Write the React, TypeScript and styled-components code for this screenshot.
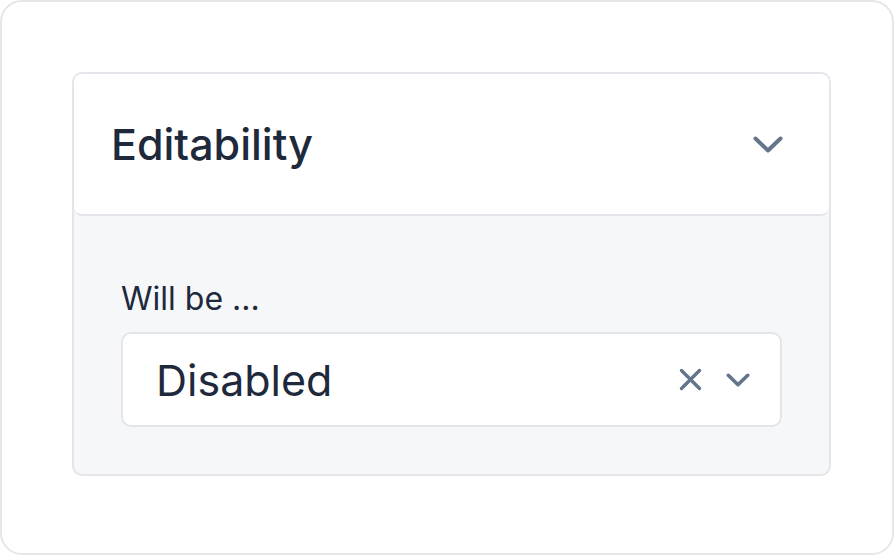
import React from "react";
import styled, { createGlobalStyle } from "styled-components";

const GlobalStyle = createGlobalStyle`
  html, body {
    margin: 0;
    padding: 0;
    background: #ffffff;
  }
  body {
    font-family: Inter, "Noto Sans", "Liberation Sans", sans-serif;
    color: #1e293b;
  }
`;

const Frame = styled.div`
  box-sizing: border-box;
  width: 894px;
  height: 555px;
  padding: 70px;
  border: 2px solid #e4e6ea;
  border-radius: 22px;
  background: #ffffff;
`;

const Card = styled.div`
  box-sizing: border-box;
  width: 759px;
  border: 2px solid #e3e5ea;
  border-radius: 10px;
  background: #f6f7f9;
  overflow: hidden;
`;

const Header = styled.div`
  box-sizing: border-box;
  height: 142px;
  display: flex;
  align-items: center;
  justify-content: space-between;
  padding: 0 46px 0 37px;
  background: #ffffff;
  border-bottom: 2px solid #e3e5ea;
  border-radius: 0 0 8px 8px;
`;

const Title = styled.h2`
  margin: 0;
  font-size: 43px;
  line-height: 50px;
  font-weight: 500;
  color: #1e293b;
`;

const Body = styled.div`
  padding: 64px 47px 47px;
  display: flex;
  flex-direction: column;
`;

const Label = styled.label`
  display: block;
  font-size: 32px;
  line-height: 38px;
  font-weight: 400;
  color: #1e293b;
  margin-bottom: 14px;
`;

const Select = styled.div`
  box-sizing: border-box;
  height: 95px;
  display: flex;
  align-items: center;
  padding: 0 30px 0 33px;
  background: #ffffff;
  border: 2px solid #e3e5ea;
  border-radius: 10px;
`;

const Value = styled.span`
  flex: 1;
  font-size: 43px;
  line-height: 50px;
  font-weight: 400;
  color: #1e293b;
`;

const Actions = styled.div`
  display: flex;
  align-items: center;
  gap: 24px;
`;

const IconButton = styled.span`
  display: inline-flex;
  align-items: center;
  justify-content: center;
  color: #64748b;
`;

const Chevron = ({ w, h, stroke }: { w: number; h: number; stroke: number }) => (
  <svg width={w} height={h} viewBox={`0 0 ${w} ${h}`} fill="none">
    <polyline
      points={`${stroke / 2 + 0.5},${stroke / 2 + 0.5} ${w / 2},${h - stroke / 2 - 0.5} ${w - stroke / 2 - 0.5},${stroke / 2 + 0.5}`}
      stroke="currentColor"
      strokeWidth={stroke}
      strokeLinecap="round"
      strokeLinejoin="round"
    />
  </svg>
);

const Cross = () => (
  <svg width="23" height="23" viewBox="0 0 23 23" fill="none">
    <path
      d="M2.5 2.5 L20.5 20.5 M20.5 2.5 L2.5 20.5"
      stroke="currentColor"
      strokeWidth="3.4"
      strokeLinecap="round"
    />
  </svg>
);

export default function App() {
  return (
    <>
      <GlobalStyle />
      <Frame>
        <Card>
          <Header>
            <Title>Editability</Title>
            <IconButton>
              <Chevron w={30} h={17} stroke={4} />
            </IconButton>
          </Header>
          <Body>
            <Label>Will be ...</Label>
            <Select>
              <Value>Disabled</Value>
              <Actions>
                <IconButton>
                  <Cross />
                </IconButton>
                <IconButton>
                  <Chevron w={24} h={14} stroke={3.6} />
                </IconButton>
              </Actions>
            </Select>
          </Body>
        </Card>
      </Frame>
    </>
  );
}
